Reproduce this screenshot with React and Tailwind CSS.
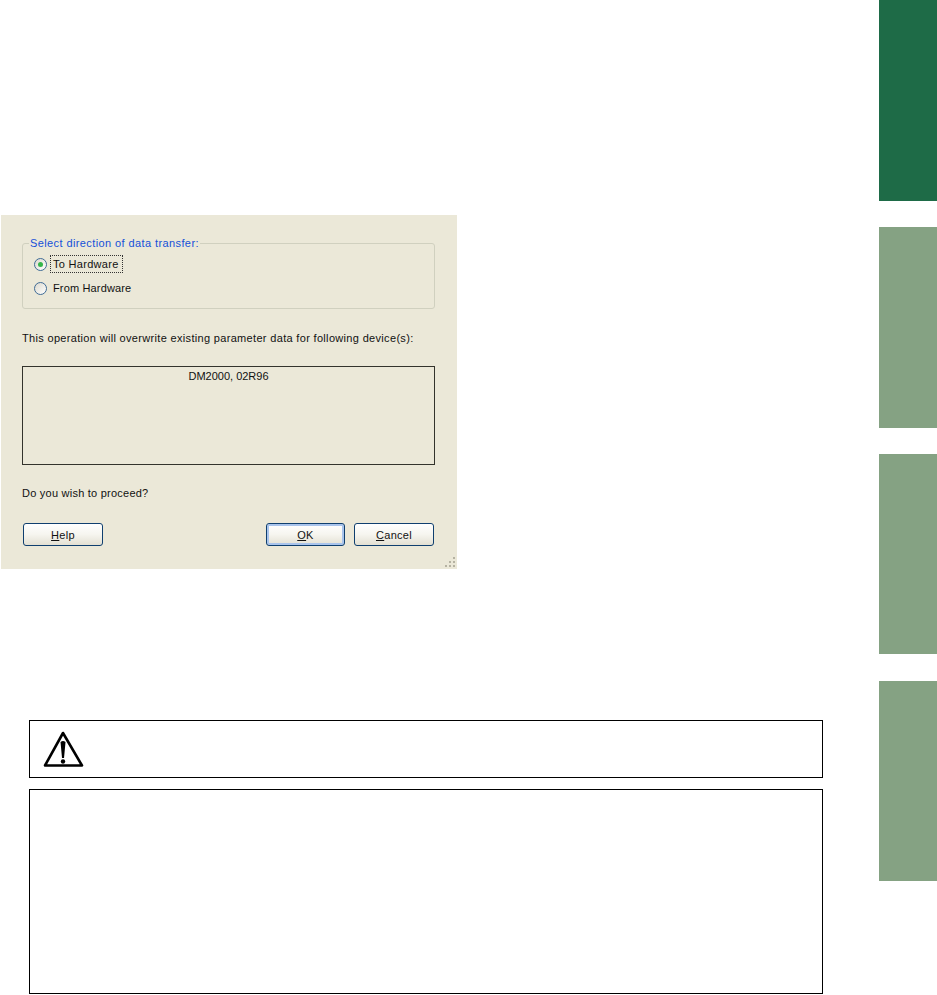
function Radio({ checked }) {
  return (
    <span className="relative flex h-[13px] w-[13px] shrink-0 items-center justify-center rounded-full border border-[#3f6b96] bg-gradient-to-br from-[#dcd9cd] to-white">
      {checked && <span className="h-[5px] w-[5px] rounded-full bg-[#35b54a]" />}
    </span>
  );
}

function XpButton({ children, def }) {
  return (
    <button
      className={
        "flex h-[23px] items-center justify-center rounded-[3px] border border-[#0f3f6f] bg-gradient-to-b from-white via-[#f6f5ef] to-[#e3e0d3] text-[11px] tracking-[0.3px] text-[#111] " +
        (def ? "w-[79px] shadow-[inset_0_0_0_2px_#a9c4ec]" : "w-[80px]")
      }
    >
      {children}
    </button>
  );
}

export default function App() {
  return (
    <div className="flex h-[995px] w-[937px] overflow-hidden bg-white font-['Liberation_Sans',Arial,sans-serif]">
      <main className="w-[879px] shrink-0 pt-[215px]">
        <section className="relative ml-px h-[354px] w-[456px] bg-[#ebe8d8] pl-[21px] pt-[28px] text-[11px] leading-[14px] text-[#111]">
          <div className="relative h-[66px] w-[413px] rounded-[3px] border border-[#d0d0bf] pl-[11px] pt-[8px]">
            <span className="absolute left-[6px] top-[-8px] bg-[#ebe8d8] px-[1px] tracking-[0.4px] text-[#1550d8]">
              Select direction of data transfer:
            </span>
            <div className="flex h-[24px] items-center">
              <Radio checked />
              <span className="ml-[3px] border border-dotted border-[#333] py-px pl-[2px] pr-[3px] tracking-[0.3px]">To Hardware</span>
            </div>
            <div className="flex h-[24px] items-center">
              <Radio />
              <span className="ml-[6px] tracking-[0.15px]">From Hardware</span>
            </div>
          </div>
          <p className="mt-[22px] whitespace-nowrap tracking-[0.325px]">
            This operation will overwrite existing parameter data for following device(s):
          </p>
          <div className="mt-[21px] h-[99px] w-[413px] border border-[#33332c] pt-[2px] text-center">DM2000, 02R96</div>
          <p className="mt-[21px] tracking-[0.235px]">Do you wish to proceed?</p>
          <div className="mt-[23px] flex w-[413px] pl-[1px]">
            <XpButton><span><u>H</u>elp</span></XpButton>
            <div className="ml-auto flex gap-[9px] pr-[1px]">
              <XpButton def><span><u>O</u>K</span></XpButton>
              <XpButton><span><u>C</u>ancel</span></XpButton>
            </div>
          </div>
          <svg className="absolute bottom-[1px] right-[1px]" width="12" height="12" viewBox="0 0 12 12" fill="#b5b2a2">
            <rect x="9" y="1" width="2" height="2" />
            <rect x="5" y="5" width="2" height="2" />
            <rect x="9" y="5" width="2" height="2" />
            <rect x="1" y="9" width="2" height="2" />
            <rect x="5" y="9" width="2" height="2" />
            <rect x="9" y="9" width="2" height="2" />
          </svg>
        </section>

        <div className="ml-[29px] mt-[151px] flex h-[58px] w-[794px] items-center border border-black pl-[13px]">
          <svg width="42" height="38" viewBox="0 0 42 38" fill="none">
            <path d="M20 3 L39 35.5 H2 Z" stroke="#000" strokeWidth="2.6" strokeLinejoin="round" />
            <path d="M17.5 12 Q20 10 22.5 12 L21 28 H19 Z" fill="#000" />
            <circle cx="20" cy="31.5" r="2.2" fill="#000" />
          </svg>
        </div>
        <div className="ml-[29px] mt-[11px] h-[205px] w-[794px] border border-black" />
      </main>

      <nav className="flex w-[58px] shrink-0 flex-col">
        <div className="h-[201px] bg-[#1e6b47]" />
        <div className="mt-[26px] h-[201px] bg-[#85a283]" />
        <div className="mt-[26px] h-[200px] bg-[#85a283]" />
        <div className="mt-[27px] h-[200px] bg-[#85a283]" />
      </nav>
    </div>
  );
}
